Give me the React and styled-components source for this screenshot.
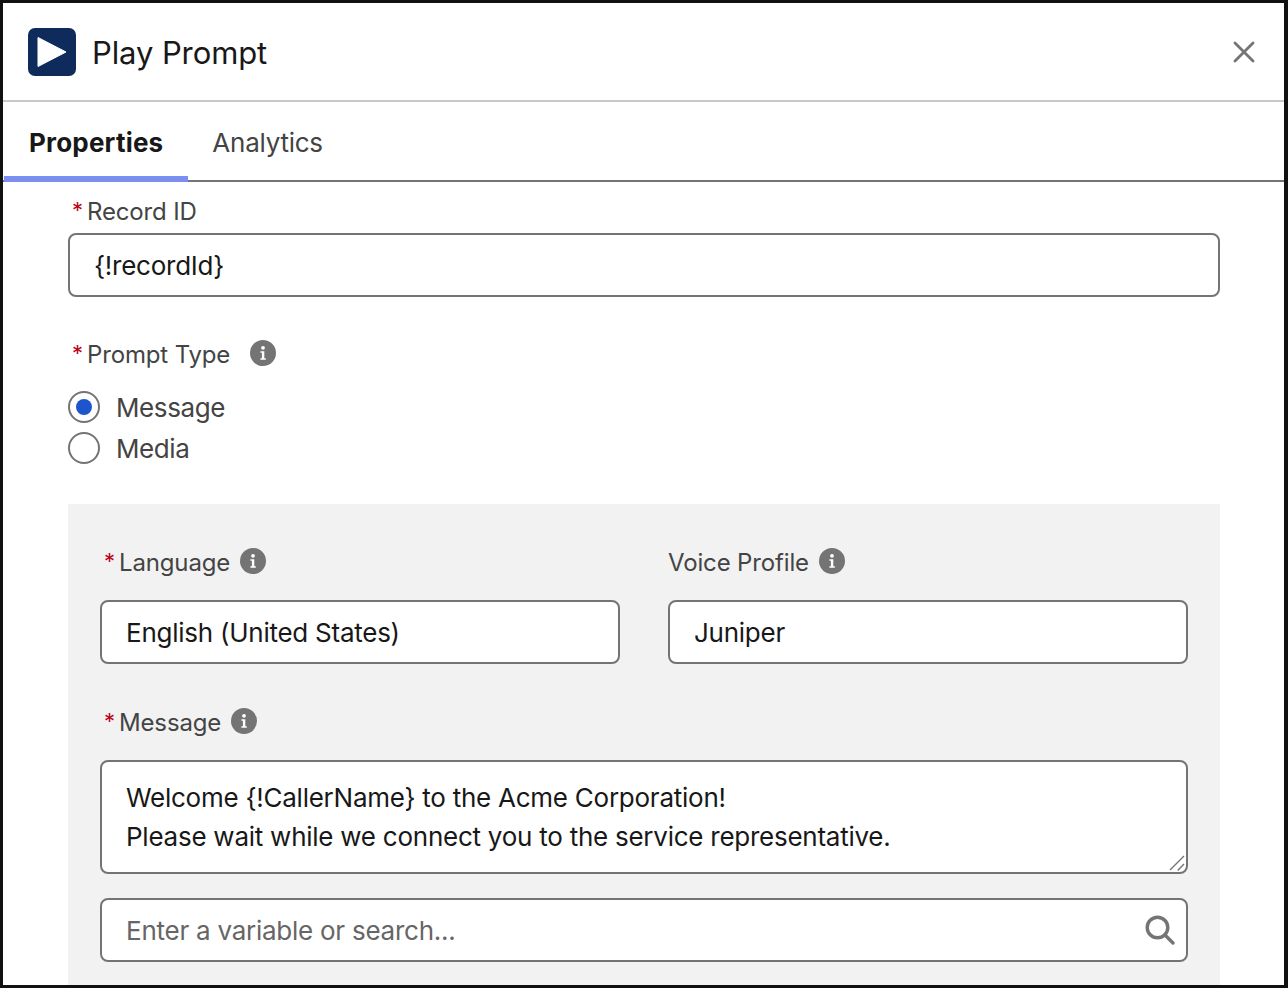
import React from "react";
import styled, { createGlobalStyle } from "styled-components";

const Global = createGlobalStyle`
  html, body { margin: 0; padding: 0; background: #fff; }
  body { font-family: Inter, "Liberation Sans", sans-serif; }
  * { box-sizing: border-box; }
`;

const Frame = styled.div`
  width: 1288px;
  height: 988px;
  overflow: hidden;
  background: #fff;
  border-style: solid;
  border-color: #111;
  border-width: 3px 4px 3px 3px;
  display: flex;
  flex-direction: column;
`;

const Header = styled.header`
  flex: none;
  height: 99px;
  padding: 25px 25px 0 25px;
  border-bottom: 2px solid #c9c9c9;
  display: flex;
  align-items: flex-start;
`;

const AppIcon = styled.div`
  width: 48px;
  height: 48px;
  border-radius: 7px;
  background: #0f2b5b;
  flex: none;
  display: flex;
`;

const Title = styled.h1`
  margin: 0 0 0 16px;
  font-size: 31px;
  line-height: 50px;
  font-weight: 400;
  letter-spacing: -0.1px;
  color: #181818;
  flex: 1;
`;

const Close = styled.button`
  border: 0;
  background: none;
  padding: 0;
  margin: 12px 3px 0 0;
  width: 24px;
  height: 24px;
  display: flex;
`;

const Tabs = styled.nav`
  flex: none;
  height: 80px;
  display: flex;
  padding: 0 0 0 1px;
  border-bottom: 2px solid #747474;
`;

const Tab = styled.div`
  height: ${p => (p.$active ? "80px" : "78px")};
  padding: 0 ${p => (p.$active ? "25px" : "24px")};
  font-size: 26px;
  line-height: 81px;
  font-weight: ${p => (p.$active ? 700 : 400)};
  color: ${p => (p.$active ? "#181818" : "#444")};
  border-bottom: ${p => (p.$active ? "6px solid #7b8ff0" : "0")};
  letter-spacing: ${p => (p.$active ? "0.2px" : "-0.25px")};
`;

const Body = styled.main`
  flex: 1;
  min-height: 0;
  overflow: hidden;
  padding: 13px 64px 0 65px;
`;

const Label = styled.div`
  display: flex;
  align-items: center;
  height: 34px;
  margin-top: ${p => p.$top || "0"};
  padding-bottom: 2px;
  font-size: 24px;
  color: #444;
  padding-left: ${p => (p.$req ? "4px" : "0")};
  letter-spacing: -0.15px;
`;

const Star = styled.span`
  color: #ba0517;
  font-size: 22px;
  margin-right: 5px;
  width: 10px;
  position: relative;
  top: -1px;
`;

const InfoWrap = styled.span`
  display: inline-flex;
  margin-left: ${p => p.$gap || "10px"};
  position: relative;
  top: -1px;
`;

const Input = styled.div`
  height: 64px;
  margin-top: ${p => p.$top || "0"};
  border: 2px solid #747474;
  border-radius: 8px;
  background: #fff;
  padding: 0 24px;
  display: flex;
  align-items: center;
  justify-content: space-between;
  font-size: 26px;
  letter-spacing: -0.25px;
  color: ${p => (p.$placeholder ? "#666" : "#181818")};
`;

const RadioGroup = styled.div`
  display: flex;
  flex-direction: column;
  gap: 9px;
  margin-top: 19px;
`;

const RadioRow = styled.div`
  display: flex;
  align-items: center;
  height: 32px;
  font-size: 26px;
  letter-spacing: -0.4px;
  color: #444;
`;

const Radio = styled.span`
  width: 32px;
  height: 32px;
  border-radius: 50%;
  border: 2px solid #747474;
  background: #fff;
  margin-right: 16px;
  display: flex;
  align-items: center;
  justify-content: center;
  flex: none;
  &::after {
    content: "";
    display: ${p => (p.$on ? "block" : "none")};
    width: 16px;
    height: 16px;
    border-radius: 50%;
    background: #1f55cc;
  }
`;

const Panel = styled.section`
  margin-top: 40px;
  padding: 42px 32px 60px;
  background: #f2f2f2;
`;

const Grid = styled.div`
  display: grid;
  grid-template-columns: 1fr 1fr;
  column-gap: 48px;
`;

const TextArea = styled.div`
  position: relative;
  height: 114px;
  margin-top: 20px;
  border: 2px solid #747474;
  border-radius: 8px;
  background: #fff;
  padding: 16px 24px 0;
  font-size: 26px;
  line-height: 39px;
  letter-spacing: -0.25px;
  color: #181818;
`;

const Grip = styled.svg`
  position: absolute;
  right: 0;
  bottom: 0;
`;

const SearchIcon = styled.svg`
  margin-right: -14px;
  flex: none;
`;

const InfoIcon = ({ size = 26 }) => (
  <svg width={size} height={size} viewBox="0 0 26 26">
    <circle cx="13" cy="13" r="13" fill="#747474" />
    <circle cx="13" cy="7.8" r="1.9" fill="#fff" />
    <path d="M10.4 11.2h3.9v7h1.5v1.6h-5.4v-1.6h1.5v-5.4h-1.5z" fill="#fff" />
  </svg>
);

export default function App() {
  return (
    <Frame>
      <Global />
      <Header>
        <AppIcon>
          <svg width="48" height="48" viewBox="0 0 48 48">
            <path d="M10 9.5L38 24 10 38.5z" fill="#fff" stroke="#fff" strokeWidth="1" strokeLinejoin="round" />
          </svg>
        </AppIcon>
        <Title>Play Prompt</Title>
        <Close aria-label="Close">
          <svg width="24" height="24" viewBox="0 0 24 24">
            <path d="M3 3l18 18M21 3L3 21" stroke="#747474" strokeWidth="2.8" strokeLinecap="round" />
          </svg>
        </Close>
      </Header>
      <Tabs>
        <Tab $active>Properties</Tab>
        <Tab>Analytics</Tab>
      </Tabs>
      <Body>
        <Label $req><Star>*</Star>Record ID</Label>
        <Input $top="4px">{"{!recordId}"}</Input>
        <Label $req $top="41px">
          <Star>*</Star>Prompt Type<InfoWrap $gap="20px"><InfoIcon /></InfoWrap>
        </Label>
        <RadioGroup>
          <RadioRow><Radio $on />Message</RadioRow>
          <RadioRow><Radio />Media</RadioRow>
        </RadioGroup>
        <Panel>
          <Grid>
            <div>
              <Label $req><Star>*</Star>Language<InfoWrap><InfoIcon /></InfoWrap></Label>
              <Input $top="20px">English (United States)</Input>
            </div>
            <div>
              <Label>Voice Profile<InfoWrap><InfoIcon /></InfoWrap></Label>
              <Input $top="20px">Juniper</Input>
            </div>
          </Grid>
          <Label $req $top="42px"><Star>*</Star>Message<InfoWrap><InfoIcon /></InfoWrap></Label>
          <TextArea>
            Welcome {"{!CallerName}"} to the Acme Corporation!
            <br />
            Please wait while we connect you to the service representative.
            <Grip width="20" height="20" viewBox="0 0 20 20">
              <path d="M4 18L18 4M11.7 18.6L18 12" stroke="#747474" strokeWidth="1.4" fill="none" />
            </Grip>
          </TextArea>
          <Input $top="24px" $placeholder>
            Enter a variable or search...
            <SearchIcon width="32" height="32" viewBox="0 0 32 32">
              <circle cx="13.5" cy="13.5" r="10.3" stroke="#747474" strokeWidth="3.4" fill="none" />
              <path d="M21 21l8 8" stroke="#747474" strokeWidth="3.4" strokeLinecap="round" />
            </SearchIcon>
          </Input>
        </Panel>
      </Body>
    </Frame>
  );
}
